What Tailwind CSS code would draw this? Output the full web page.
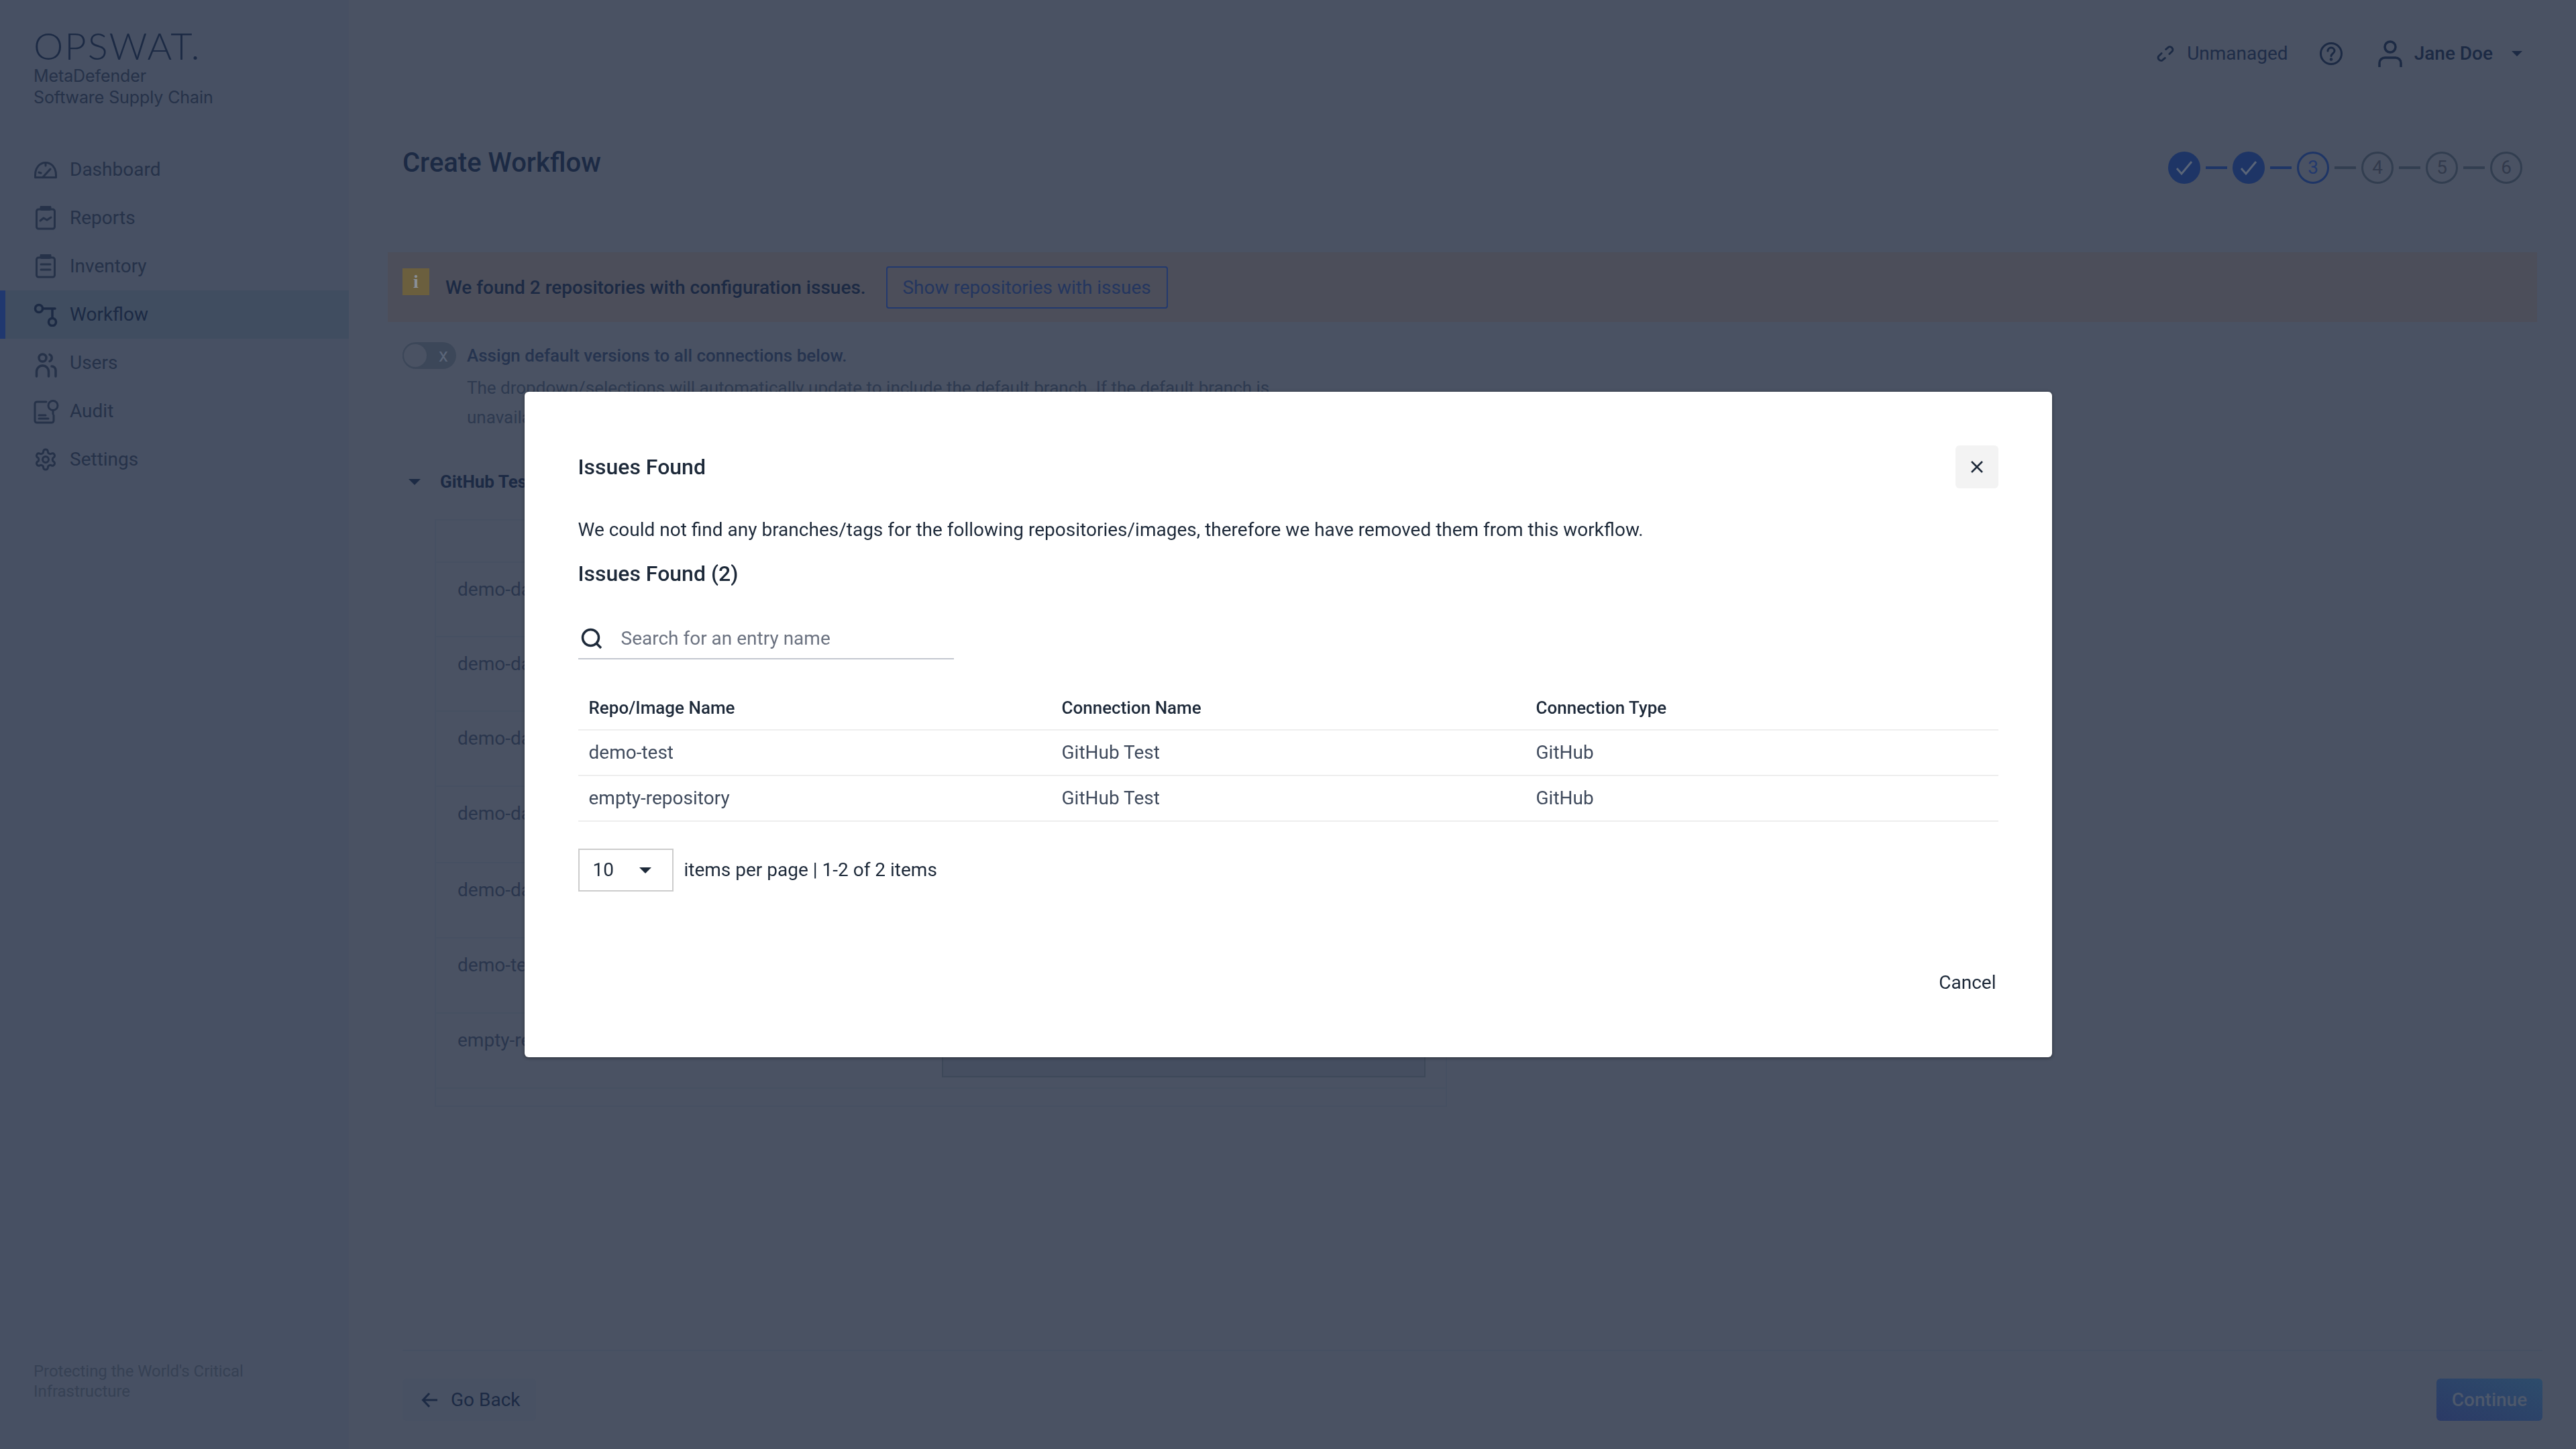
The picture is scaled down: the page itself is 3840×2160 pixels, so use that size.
<!DOCTYPE html>
<html lang="en">
<head>
    <meta charset="UTF-8">
    <title>Create Workflow</title>
    <script src="https://cdn.jsdelivr.net/npm/@tailwindcss/browser@4"></script>
</head>
<body class="font-['Roboto',sans-serif] text-[28px] bg-[#4a5263] overflow-hidden">

    <div class="flex h-screen w-full">
        <!-- sidebar -->
        <aside class="w-[520px] h-screen flex flex-col bg-[#475063] text-[#263249] shrink-0">
            <div class="pl-[50px] pt-[38px] h-[217px]">
                <div class="font-['Lato',sans-serif] font-light text-[56px] leading-[60px] tracking-[2px] text-[#1c2a44] h-[60px]">OPSWAT.</div>
                <div class="font-['Inter',sans-serif] text-[25px] leading-[32px] -mt-[1px] tracking-[-0.1px] text-[#263249]">MetaDefender<br>Software Supply Chain</div>
            </div>
            <nav class="flex flex-col">
                <a class="h-[72px] flex items-center pl-[50px] gap-[18px]">
                    <svg class="w-[36px] h-[36px]" viewBox="0 0 36 36" fill="none" stroke="currentColor" stroke-width="3" stroke-linejoin="round" stroke-linecap="round"><path d="M2.5 29.5V26C2.5 15 9 7.5 18 7.5S33.5 15 33.5 26V29.5Z"/><path d="M14 29L25 17M8 22l3 1M18 8v4"/></svg>
                    <span>Dashboard</span>
                </a>
                <a class="h-[72px] flex items-center pl-[50px] gap-[18px]">
                    <svg class="w-[36px] h-[36px]" viewBox="0 0 36 36" fill="none" stroke="currentColor" stroke-width="3" stroke-linejoin="round" stroke-linecap="round"><rect x="4.5" y="5" width="27" height="29" rx="3"/><rect x="11" y="0.5" width="14" height="5" rx="2" fill="currentColor"/><path d="M10 22l5-4 5 3 6-4"/></svg>
                    <span>Reports</span>
                </a>
                <a class="h-[72px] flex items-center pl-[50px] gap-[18px]">
                    <svg class="w-[36px] h-[36px]" viewBox="0 0 36 36" fill="none" stroke="currentColor" stroke-width="3" stroke-linejoin="round" stroke-linecap="round"><rect x="4.5" y="5" width="27" height="29" rx="3"/><rect x="11" y="0.5" width="14" height="5" rx="2" fill="currentColor"/><path d="M11 15h14M11 23h14"/></svg>
                    <span>Inventory</span>
                </a>
                <a class="h-[72px] flex items-center pl-[42px] gap-[18px] border-l-[8px] border-[#20386f] bg-[#404d60] text-[#1c2a44]">
                    <svg class="w-[36px] h-[36px]" viewBox="0 0 36 36" fill="none" stroke="currentColor" stroke-width="3.5" stroke-linecap="round"><circle cx="8" cy="9" r="5.5"/><path d="M14 9H32M28 9V23"/><circle cx="28" cy="29" r="5.5"/></svg>
                    <span>Workflow</span>
                </a>
                <a class="h-[72px] flex items-center pl-[50px] gap-[18px]">
                    <svg class="w-[36px] h-[36px] overflow-visible" viewBox="0 0 36 36" fill="none" stroke="currentColor" stroke-width="3.5" stroke-linecap="round"><circle cx="13.5" cy="10.5" r="5.5"/><path d="M24 5.5a5.5 5.5 0 0 1 0 10M4.5 38v-7a9 9 0 0 1 18 0v7M27 23a6 6 0 0 1 6 6v9"/></svg>
                    <span>Users</span>
                </a>
                <a class="h-[72px] flex items-center pl-[50px] gap-[18px]">
                    <svg class="w-[36px] h-[36px] overflow-visible" viewBox="0 0 36 36" fill="none" stroke="currentColor" stroke-width="3" stroke-linecap="round" stroke-linejoin="round"><path d="M19 4H5a3 3 0 0 0-3 3V32a3 3 0 0 0 3 3H27a3 3 0 0 0 3-3V24"/><circle cx="29" cy="9.5" r="7"/><path d="M29 17v5M8 24h10M8 29h14"/></svg>
                    <span>Audit</span>
                </a>
                <a class="h-[72px] flex items-center pl-[50px] gap-[18px]">
                    <svg class="w-[36px] h-[36px]" viewBox="0 0 24 24" fill="none" stroke="currentColor" stroke-width="2" stroke-linecap="round" stroke-linejoin="round"><path d="M12.22 2h-.44a2 2 0 0 0-2 2v.18a2 2 0 0 1-1 1.73l-.43.25a2 2 0 0 1-2 0l-.15-.08a2 2 0 0 0-2.73.73l-.22.38a2 2 0 0 0 .73 2.73l.15.1a2 2 0 0 1 1 1.72v.51a2 2 0 0 1-1 1.74l-.15.09a2 2 0 0 0-.73 2.73l.22.38a2 2 0 0 0 2.73.73l.15-.08a2 2 0 0 1 2 0l.43.25a2 2 0 0 1 1 1.73V20a2 2 0 0 0 2 2h.44a2 2 0 0 0 2-2v-.18a2 2 0 0 1 1-1.73l.43-.25a2 2 0 0 1 2 0l.15.08a2 2 0 0 0 2.73-.73l.22-.39a2 2 0 0 0-.73-2.73l-.15-.08a2 2 0 0 1-1-1.74v-.5a2 2 0 0 1 1-1.74l.15-.09a2 2 0 0 0 .73-2.73l-.22-.38a2 2 0 0 0-2.73-.73l-.15.08a2 2 0 0 1-2 0l-.43-.25a2 2 0 0 1-1-1.73V4a2 2 0 0 0-2-2z"/><circle cx="12" cy="12" r="3"/></svg>
                    <span>Settings</span>
                </a>
            </nav>
            <p class="mt-auto mb-[71px] pl-[50px] text-[24px] tracking-[-0.05px] leading-[30px] text-[#364154] w-[400px]">Protecting the World's Critical Infrastructure</p>
        </aside>

        <!-- main -->
        <main class="flex-1 h-screen flex flex-col pl-[80px] pr-[80px] text-[#1c2a44] min-w-0">
            <header class="h-[160px] flex items-center justify-end shrink-0 text-[#1c2a44]">
                <svg class="w-[28px] h-[28px] mr-[18px]" viewBox="0 0 24 24" fill="none" stroke="currentColor" stroke-width="2.4" stroke-linecap="round"><path d="M12.500 6.500L16 3.500a3.800 3.800 0 0 1 5 5L17 12.500"/><path d="M11.500 17.500L8 20.500a3.800 3.800 0 0 1-5-5L7 11.500"/></svg>
                <span class="text-[#1f2d48]">Unmanaged</span>
                <svg class="w-[36px] h-[36px] ml-[46px]" viewBox="0 0 36 36" fill="none" stroke="currentColor" stroke-width="3" stroke-linecap="round"><circle cx="18" cy="18" r="15.500"/><path d="M13 14a5 5 0 0 1 10 0c0 3.500-5 4-5 7.500"/><circle cx="18" cy="26.500" r="0.800" fill="currentColor"/></svg>
                <svg class="w-[36px] h-[40px] ml-[52px]" viewBox="0 0 36 40" fill="none" stroke="currentColor" stroke-width="3.500"><circle cx="18" cy="10" r="8"/><path d="M2 40v-6a8 8 0 0 1 8-8h16a8 8 0 0 1 8 8v6"/></svg>
                <span class="ml-[18px] font-medium">Jane Doe</span>
                <span class="ml-[28px] mr-0 w-0 h-0 border-x-[8px] border-x-transparent border-t-[8px] border-t-[#1c2a44]"></span>
            </header>

            <div class="flex-1 min-h-0">
                <div class="flex justify-between items-start mt-[55px] h-[60px] mb-[101px]">
                    <h1 class="text-[40px] leading-[56px] font-medium text-[#1c2a44]">Create Workflow</h1>
                    <div class="flex items-center gap-[8px] mt-[11px] text-[#26407a]">
                        <span class="w-[48px] h-[48px] rounded-full bg-[#1e3566] flex items-center justify-center">
                            <svg class="w-[26px] h-[22px]" viewBox="0 0 26 22" fill="none" stroke="#5a6578" stroke-width="3"><path d="M2 12l7 8L24 2"/></svg>
                        </span>
                        <span class="w-[32px] h-[4px] bg-[#1e3566]"></span>
                        <span class="w-[48px] h-[48px] rounded-full bg-[#1e3566] flex items-center justify-center">
                            <svg class="w-[26px] h-[22px]" viewBox="0 0 26 22" fill="none" stroke="#5a6578" stroke-width="3"><path d="M2 12l7 8L24 2"/></svg>
                        </span>
                        <span class="w-[32px] h-[4px] bg-[#1e3566]"></span>
                        <span class="w-[48px] h-[48px] rounded-full border-[3px] border-[#1e3566] flex items-center justify-center text-[#22396e]">3</span>
                        <span class="w-[32px] h-[4px] bg-[#323e50]"></span>
                        <span class="w-[48px] h-[48px] rounded-full border-[3px] border-[#323e50] flex items-center justify-center text-[#323a4c]">4</span>
                        <span class="w-[32px] h-[4px] bg-[#323e50]"></span>
                        <span class="w-[48px] h-[48px] rounded-full border-[3px] border-[#323e50] flex items-center justify-center text-[#323a4c]">5</span>
                        <span class="w-[32px] h-[4px] bg-[#323e50]"></span>
                        <span class="w-[48px] h-[48px] rounded-full border-[3px] border-[#323e50] flex items-center justify-center text-[#323a4c]">6</span>
                    </div>
                </div>

                <div class="-mx-[22px] h-[104px] bg-[#4c4e5a] pl-[22px] pt-[21px] flex items-start">
                    <span class="w-[40px] h-[40px] mt-[3px] bg-[#6b5f3e] flex items-center justify-center font-bold text-[#8a8f98] text-[28px] font-['Liberation_Serif',serif]">i</span>
                    <span class="ml-[24px] leading-[63px] font-medium">We found 2 repositories with configuration issues.</span>
                    <span class="ml-[30px] h-[63px] w-[420px] border-2 border-[#22396e] rounded-[4px] flex items-center justify-center text-[#24365f]">Show repositories with issues</span>
                </div>

                <div class="mt-[30px] h-[40px] flex items-center">
                    <span class="w-[80px] h-[40px] rounded-full bg-[#3c4759] flex items-center justify-between pr-[12px]">
                        <span class="w-[38px] h-[38px] rounded-full bg-[#4a5263] border-2 border-[#3c4759]"></span>
                        <span class="text-[#5a6578] text-[28px] leading-none">x</span>
                    </span>
                    <span class="ml-[16px] font-medium text-[26px] text-[#26344f]">Assign default versions to all connections below.</span>
                </div>
                <p class="mt-[6px] ml-[96px] w-[1230px] text-[26px] leading-[44px] text-[#2e3a50]">The dropdown/selections will automatically update to include the default branch. If the default branch is unavailable</p>

                <div class="mt-[54px] h-[40px] flex items-center">
                    <span class="ml-[9px] w-0 h-0 border-x-[9px] border-x-transparent border-t-[9px] border-t-[#1c2a44]"></span>
                    <span class="ml-[29px] font-bold text-[26px]">GitHub Test</span>
                </div>

                <div class="mt-[36px] ml-[48px] w-[1509px] border-x-2 border-t-2 border-[#465062] text-[#2a364d]">
                    <div class="h-[63px] border-b-2 border-[#465062]"></div>
                    <div class="h-[111px] pl-[32px] pt-[19px] leading-[42px] border-b-2 border-[#465062]">demo-data</div>
                    <div class="h-[111px] pl-[32px] pt-[19px] leading-[42px] border-b-2 border-[#465062]">demo-data</div>
                    <div class="h-[112px] pl-[32px] pt-[19px] leading-[42px] border-b-2 border-[#465062]">demo-data</div>
                    <div class="h-[114px] pl-[32px] pt-[19px] leading-[42px] border-b-2 border-[#465062]">demo-data</div>
                    <div class="h-[112px] pl-[32px] pt-[19px] leading-[42px] border-b-2 border-[#465062]">demo-data</div>
                    <div class="h-[112px] pl-[32px] pt-[19px] leading-[42px] border-b-2 border-[#465062]">demo-test</div>
                    <div class="h-[112px] pl-[32px] pt-[19px] leading-[42px] border-b-2 border-[#465062] relative flex">
                        <span>empty-repository</span>
                        <div class="absolute left-[754px] top-[14px] w-[721px] h-[81px] border-2 border-[#3d4859] bg-[#454e60] flex items-center justify-between pl-[22px] pr-[24px]">
                            <span>Select branch</span>
                            <span class="w-0 h-0 border-x-[7px] border-x-transparent border-t-[8px] border-t-[#1c2a44]"></span>
                        </div>
                    </div>
                    <div class="h-[27px] border-b-2 border-[#465062]"></div>
                </div>
            </div>

            <footer class="h-[148px] shrink-0 -mr-[30px] border-t-2 border-[#465062] pt-[41px] flex justify-between">
                <span class="w-[199px] h-[63px] rounded-[6px] bg-[#485163] flex items-center pl-[28px] gap-[20px]">
                    <svg class="w-[24px] h-[24px]" viewBox="0 0 24 24" fill="none" stroke="currentColor" stroke-width="3"><path d="M24 12H3M12 2L2.500 12 12 22"/></svg>
                    <span>Go Back</span>
                </span>
                <span class="w-[158px] h-[63px] rounded-[6px] bg-gradient-to-tr from-[#2b3a66] to-[#2d4c6b] flex items-center justify-center text-[#4d586b] font-medium">Continue</span>
            </footer>
        </main>
    </div>

    <!-- modal -->
    <div class="fixed inset-0 flex items-center justify-center">
        <div class="w-[2277px] h-[992px] bg-white rounded-[6px] shadow-[0_1px_5px_rgba(0,0,0,0.45)] px-[80px] pt-[80px] text-[#1d2939] flex flex-col">
            <div class="flex items-center justify-between h-[64px]">
                <h2 class="text-[32px] font-medium -mt-[1px]">Issues Found</h2>
                <span class="w-[64px] h-[64px] rounded-[6px] bg-[#f3f3f3] flex items-center justify-center">
                    <svg class="w-[18px] h-[18px]" viewBox="0 0 18 18" fill="none" stroke="#1d2939" stroke-width="2.500"><path d="M1 1L17 17M17 1L1 17"/></svg>
                </span>
            </div>
            <p class="mt-[42px] h-[40px] leading-[40px]">We could not find any branches/tags for the following repositories/images, therefore we have removed them from this workflow.</p>
            <h3 class="mt-[21px] text-[32px] leading-[48px] font-medium">Issues Found (2)</h3>
            <div class="mt-[35px] w-[560px] h-[69px] border-b-2 border-[#c3c7cf] flex items-center pt-[8px]">
                <svg class="ml-[4px] w-[32px] h-[32px]" viewBox="0 0 32 32" fill="none" stroke="#1d2939" stroke-width="3.500"><circle cx="14.500" cy="14.500" r="12"/><path d="M23 23l7 7"/></svg>
                <span class="ml-[28px] text-[#6b7280]">Search for an entry name</span>
            </div>
            <table class="mt-[40px] w-full table-fixed border-collapse">
                <thead>
                    <tr class="h-[65px] border-b-2 border-[#eeeeee] text-left text-[26px] font-medium">
                        <th class="w-[721px] pl-[16px] font-medium">Repo/Image Name</th>
                        <th class="w-[707px] pl-0 font-medium">Connection Name</th>
                        <th class="font-medium">Connection Type</th>
                    </tr>
                </thead>
                <tbody class="text-[#3f4a5c]">
                    <tr class="h-[68px] border-b-2 border-[#eeeeee]">
                        <td class="pl-[16px]">demo-test</td><td>GitHub Test</td><td>GitHub</td>
                    </tr>
                    <tr class="h-[68px] border-b-2 border-[#eeeeee]">
                        <td class="pl-[16px]">empty-repository</td><td>GitHub Test</td><td>GitHub</td>
                    </tr>
                </tbody>
            </table>
            <div class="mt-[40px] flex items-center">
                <span class="w-[142px] h-[64px] border-2 border-[#cccccc] flex items-center pl-[20px]">
                    <span>10</span>
                    <span class="ml-[38px] w-0 h-0 border-x-[9px] border-x-transparent border-t-[9px] border-t-[#1d2939]"></span>
                </span>
                <span class="ml-[16px]">items per page | 1-2 of 2 items</span>
            </div>
            <div class="mt-[115px] flex justify-end pr-[3px]">
                <span class="text-[#1d2939]">Cancel</span>
            </div>
        </div>
    </div>

</body>
</html>
